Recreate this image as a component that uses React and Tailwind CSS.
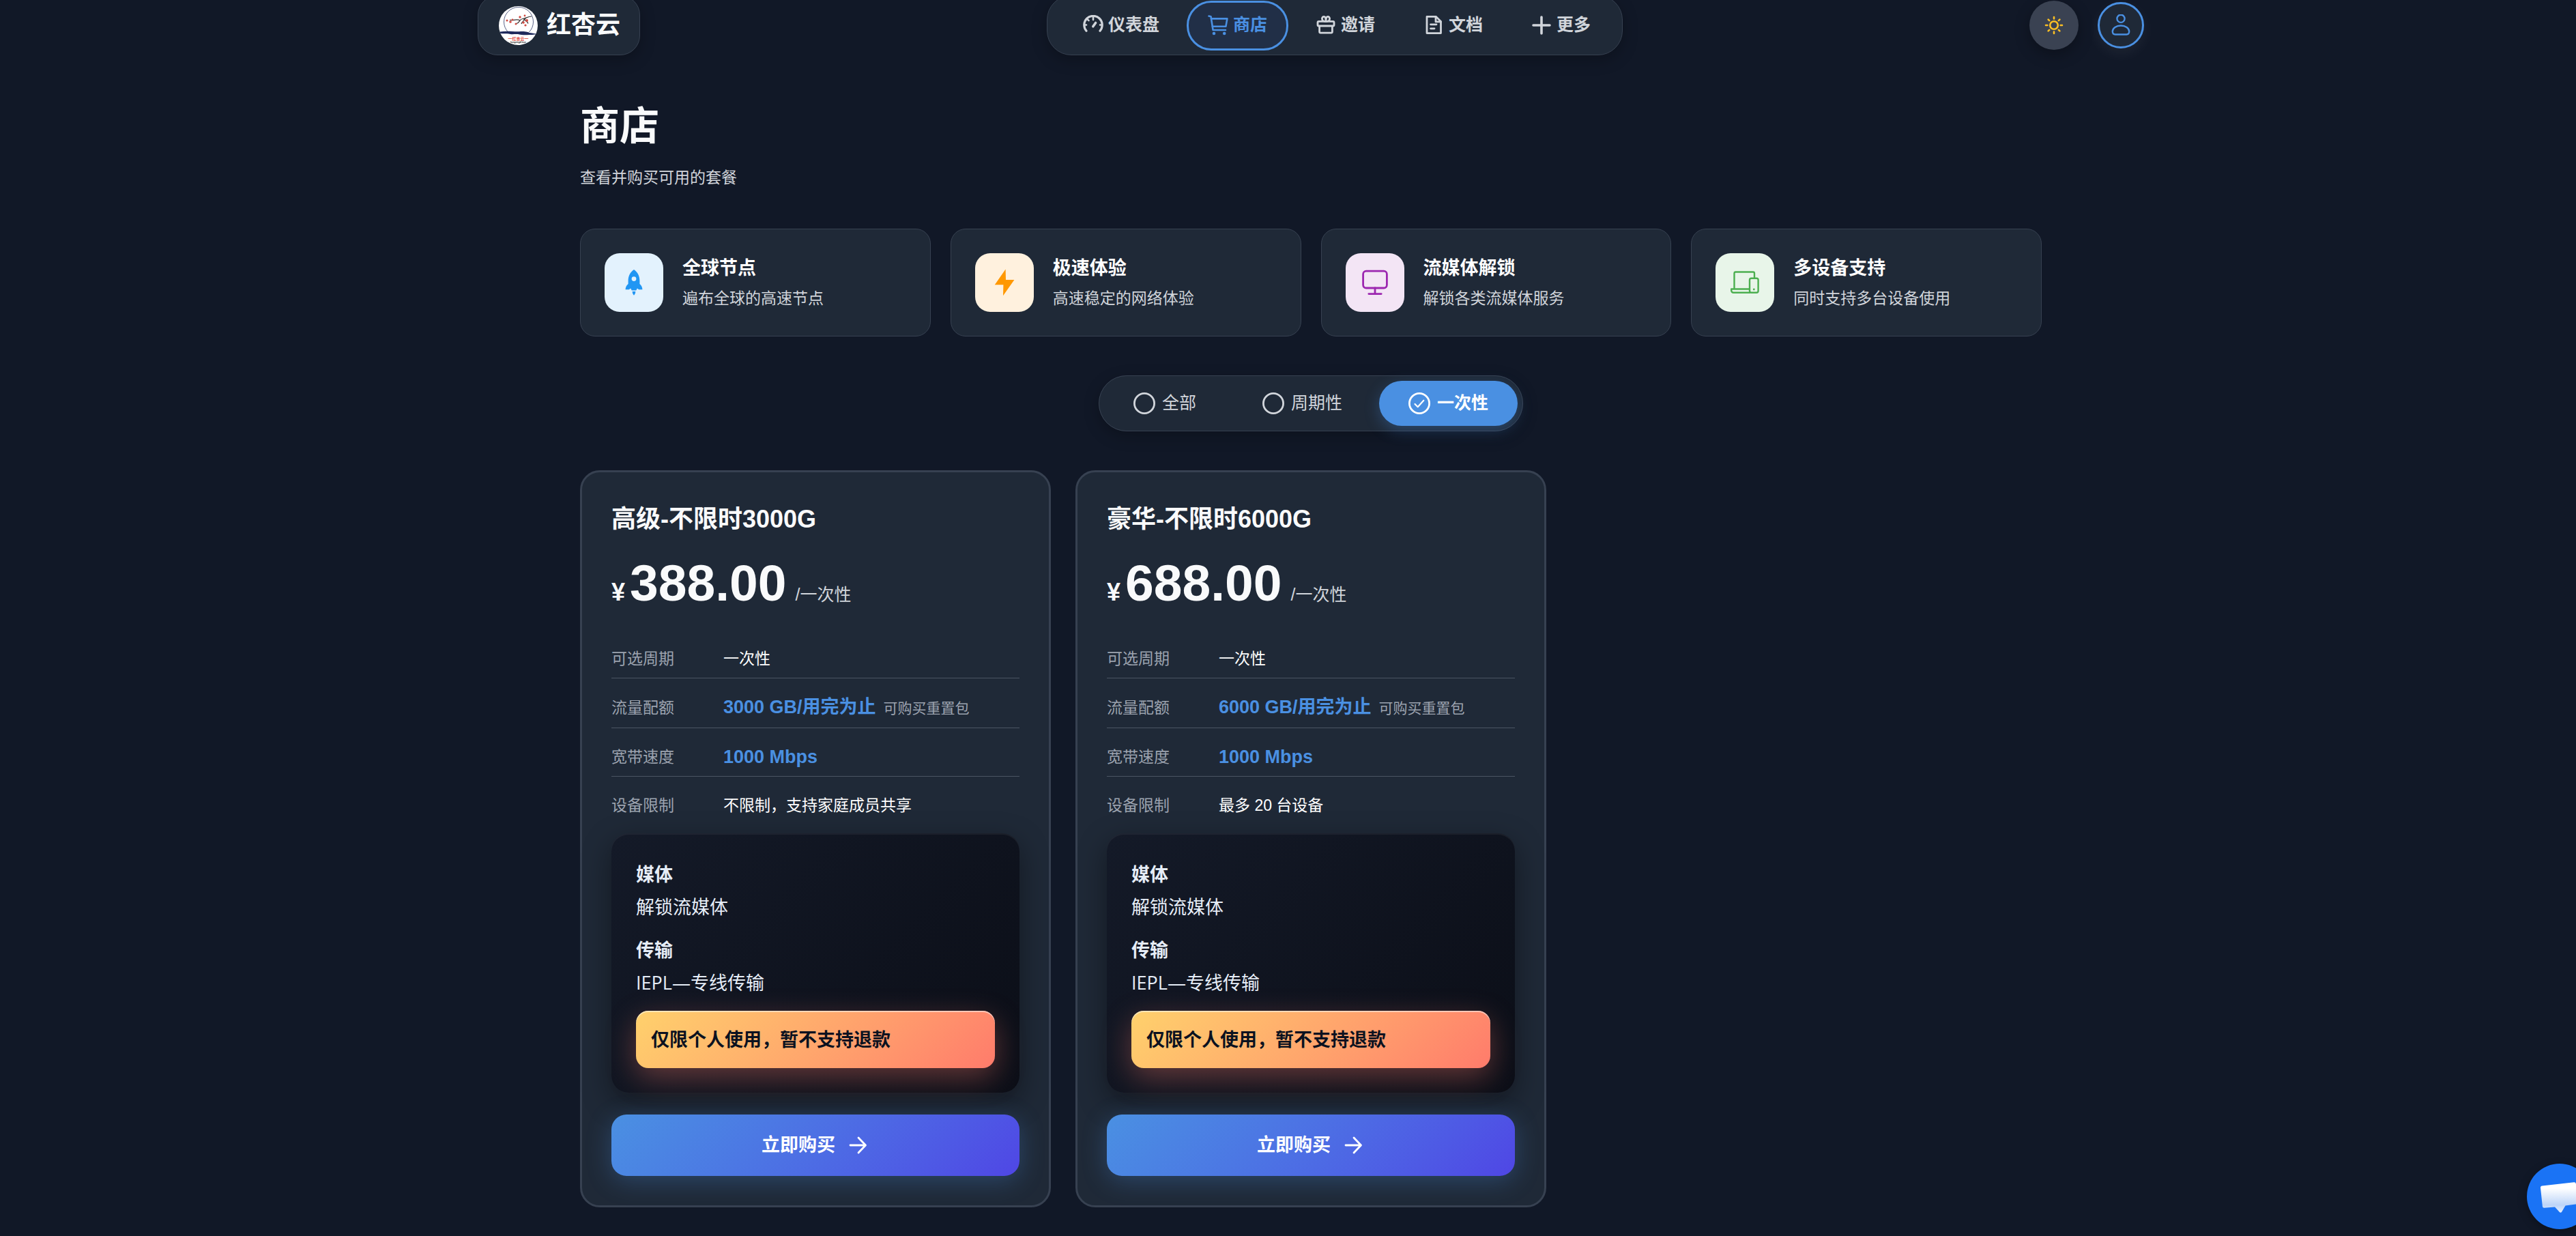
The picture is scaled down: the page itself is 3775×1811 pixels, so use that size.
import { useState } from 'react';

const navItems = [
  { label: '仪表盘', icon: GaugeIcon },
  { label: '商店', icon: CartIcon, active: true },
  { label: '邀请', icon: GiftIcon },
  { label: '文档', icon: DocIcon },
];

const features = [
  { title: '全球节点', desc: '遍布全球的高速节点', icon: RocketIcon, box: 'bg-[#e3f2fd] text-[#2196f3]' },
  { title: '极速体验', desc: '高速稳定的网络体验', icon: BoltIcon, box: 'bg-[#fff1de] text-[#ff9800]' },
  { title: '流媒体解锁', desc: '解锁各类流媒体服务', icon: MonitorIcon, box: 'bg-[#f3e5f5] text-[#9c27b0]' },
  { title: '多设备支持', desc: '同时支持多台设备使用', icon: DevicesIcon, box: 'bg-[#e8f5e9] text-[#4caf50]' },
];

const filters = ['全部', '周期性', '一次性'];

const plans = [
  { name: '高级-不限时3000G', price: '388.00', traffic: '3000 GB/用完为止', devices: '不限制，支持家庭成员共享' },
  { name: '豪华-不限时6000G', price: '688.00', traffic: '6000 GB/用完为止', devices: '最多 20 台设备' },
];

/* Nav icons */
function GaugeIcon() {
  return (
    <svg className="size-[30px]" viewBox="0 0 30 30" fill="none" stroke="currentColor" strokeWidth="3.2" strokeLinecap="round" aria-hidden="true">
      <path d="M5 23.2A13.2 13.2 0 1 1 25 23.2" />
      <path d="M15 3.5v3.5M3.5 14.5h1.5M25 14.5h1.5M7.2 6.8l1.3 1.3" strokeWidth="2.6" />
      <path d="M14.8 16.8l3.8-5.3" strokeWidth="3.6" />
    </svg>
  );
}

function CartIcon() {
  return (
    <svg className="size-[30px]" viewBox="0 0 30 30" fill="none" stroke="currentColor" strokeWidth="2.6" strokeLinecap="round" strokeLinejoin="round" aria-hidden="true">
      <path d="M1.5 1.5l3 .8L7.6 22H26" />
      <path d="M5 5.4h23.4l-2 11.4H6.8" />
      <circle cx="9" cy="27" r="2.3" fill="currentColor" stroke="none" />
      <circle cx="24.2" cy="27" r="2.3" fill="currentColor" stroke="none" />
    </svg>
  );
}

function GiftIcon() {
  return (
    <svg className="size-[30px]" viewBox="0 0 30 30" fill="none" stroke="currentColor" strokeWidth="2.8" strokeLinejoin="round" aria-hidden="true">
      <rect x="3" y="9.4" width="24" height="6.6" rx="1.5" />
      <path d="M5.6 16v8.5c0 1 .6 1.6 1.6 1.6h15.6c1 0 1.6-.6 1.6-1.6V16" />
      <path d="M15 9.4c-3 0-5.6-1.4-5.6-4 0-1.9 1.2-3 2.7-3 1.9 0 2.9 2.6 2.9 7zM15 9.4c3 0 5.6-1.4 5.6-4 0-1.9-1.2-3-2.7-3-1.9 0-2.900 2.6-2.9 7z" />
    </svg>
  );
}

function DocIcon() {
  return (
    <svg className="size-[30px]" viewBox="0 0 30 30" fill="none" stroke="currentColor" strokeWidth="2.8" strokeLinecap="round" strokeLinejoin="round" aria-hidden="true">
      <path d="M5 2.4h13.5l7 7v17.2H5z" />
      <path d="M18 2.4v7.5h7.5M10.5 13.8H19M10.5 19.8H16" />
    </svg>
  );
}

function PlusIcon() {
  return (
    <svg className="size-[30px]" viewBox="0 0 30 30" fill="none" stroke="currentColor" strokeWidth="3.6" strokeLinecap="round" aria-hidden="true">
      <path d="M15 3v24M3 15h24" />
    </svg>
  );
}

/* Feature icons */
function RocketIcon() {
  return (
    <svg className="size-[42px]" viewBox="0 0 42 42" fill="currentColor" aria-hidden="true">
      <path
        fillRule="evenodd"
        d="M21 2c5.500 3.6 8.4 9.6 8.4 16.5V23c2.6 2.3 4 5 4 8.2h-5.2l-2.3-1.7-1.7 3h-6.4l-1.7-3-2.3 1.7H8.6c0-3.2 1.4-5.9 4-8.2v-4.5C12.6 11.6 15.5 5.600 21 2zm0 10.2a3.4 3.4 0 1 0 0 6.8 3.4 3.4 0 0 0 0-6.8z"
      />
      <path d="M18.7 34h4.6c0 2.4-.8 4.3-2.3 5.8-1.5-1.5-2.3-3.4-2.3-5.8z" />
    </svg>
  );
}

function BoltIcon() {
  return (
    <svg className="size-[42px]" viewBox="0 0 42 42" fill="currentColor" aria-hidden="true">
      <path d="M22.6 1.500L6.800 24.2h12.6L19 40.2 35.4 17H23z" />
    </svg>
  );
}

function MonitorIcon() {
  return (
    <svg className="size-[42px]" viewBox="0 0 42 42" fill="none" stroke="currentColor" strokeWidth="2.8" strokeLinecap="round" aria-hidden="true">
      <rect x="3.6" y="4.2" width="34.8" height="24.8" rx="4.5" />
      <path d="M21 29v8.6M11.8 37.6h18.4" />
    </svg>
  );
}

function DevicesIcon() {
  return (
    <svg className="size-[42px]" viewBox="0 0 42 42" fill="none" stroke="currentColor" strokeWidth="2.4" strokeLinejoin="round" aria-hidden="true">
      <path d="M5.5 30.5v-23a2 2 0 0 1 2-2H33a2 2 0 0 1 2 2V14" />
      <path d="M28 30.5H1.2v2.2a3 3 0 0 0 3 3H29" />
      <rect x="28" y="14.8" width="12.6" height="20.9" rx="2.5" />
      <circle cx="34.3" cy="31" r="1.4" fill="currentColor" stroke="none" />
    </svg>
  );
}

function SunIcon() {
  return (
    <svg className="size-8" viewBox="0 0 32 32" fill="none" stroke="currentColor" strokeWidth="2.6" strokeLinecap="round" aria-hidden="true">
      <circle cx="16" cy="16" r="5.8" />
      <path d="M16 4v2.400M16 25.6V28M4 16h2.4M25.6 16H28M7.600 7.6l1.6 1.6M22.8 22.8l1.6 1.6M7.6 24.4l1.6-1.6M22.8 9.2l1.6-1.6" />
    </svg>
  );
}

function UserIcon() {
  return (
    <svg className="size-8" viewBox="0 0 32 32" fill="none" stroke="currentColor" strokeWidth="2.4" aria-hidden="true">
      <circle cx="16" cy="6.300" r="5.6" />
      <path d="M16 16.5c6.8 0 12.2 3.7 12.2 8.6 0 3-1.3 4.4-4 4.4H7.8c-2.7 0-4-1.4-4-4.4 0-4.900 5.4-8.6 12.2-8.6z" />
    </svg>
  );
}

function RadioIcon({ checked }) {
  return (
    <svg className="size-8" viewBox="0 0 32 32" fill="none" stroke="currentColor" strokeWidth="2.8" strokeLinecap="round" strokeLinejoin="round" aria-hidden="true">
      <circle cx="16" cy="16" r="14.6" />
      {checked && <path d="M9.5 17l4.2 4.2 8.6-9.5" strokeWidth="2.2" />}
    </svg>
  );
}

function LogoIcon() {
  return (
    <svg className="size-[57px]" viewBox="0 0 57 57" aria-hidden="true">
      <circle cx="28.5" cy="28.5" r="28.5" fill="#fff" />
      <circle cx="29" cy="23" r="21.5" fill="none" stroke="#5b6488" strokeWidth="1" />
      <path d="M8 40h42v6H8z" fill="#fff" />
      <path d="M48 15c-6 0-8 3-13 3.5S31 24 26 25.5M40 16.5c-2 4-6 6-7 9.5M36 18.5c2 3 6 3 7 7M31 21c-5-3-8 1-15-1" fill="none" stroke="#3a3636" strokeWidth="1.2" />
      <g fill="#cf4a42">
        <circle cx="12" cy="21" r="1.5" />
        <circle cx="17" cy="23" r="1.8" />
        <circle cx="20" cy="20" r="1.4" />
        <circle cx="25" cy="26" r="1.5" />
        <circle cx="31" cy="16" r="1.7" />
        <circle cx="36" cy="24" r="1.8" />
        <circle cx="41" cy="21" r="2" />
        <circle cx="39" cy="28" r="1.6" />
        <circle cx="38" cy="14" r="1.4" />
      </g>
      <path d="M2 37.5c10-2 22 .5 30-.5 6 0 11 .5 12 2 4 .5 8 .5 12 2-8 1.5-19 1.5-26 .5-4-1.2-9 .3-13-.5-7-1.500-12 0-15.5-1.500z" fill="#1f2a5c" />
      <text x="28.5" y="50" textAnchor="middle" fontSize="6" fontWeight="700" fill="#e0483c">一红杏云一</text>
      <text x="28.5" y="54" textAnchor="middle" fontSize="3" fontWeight="700" fill="#222">hongxingdl.love</text>
    </svg>
  );
}

function NavItem({ label, icon: Icon, active }) {
  return (
    <a
      href="#"
      className={
        active
          ? 'flex h-[73px] items-center gap-[7px] rounded-[36px] border-[3px] border-[#4a90e2] bg-[#212f47] px-7 text-[#4a90e2]'
          : 'flex h-[73px] items-center gap-[7px] rounded-[36px] px-[31px] text-[#d1d5db]'
      }
    >
      <Icon />
      {label}
    </a>
  );
}

function Header() {
  return (
    <header className="mx-auto -mt-[7px] flex max-w-[2442px] items-center justify-between">
      <a href="#" className="flex h-[88px] items-center gap-[13px] rounded-[29px] border border-[#374151] bg-[#1f2937] pr-7 pl-[30px] text-[36px] font-bold text-[#f9fafb] shadow-[0_7px_22px_rgba(0,0,0,0.25)]">
        <LogoIcon />
        红杏云
      </a>
      <nav className="flex h-[88px] items-center gap-[9px] rounded-[36px] border border-[#374151] bg-[#1f2937] pr-[15px] pl-[21px] text-[25px] font-bold shadow-[0_7px_22px_rgba(0,0,0,0.25)]">
        {navItems.map((item) => (
          <NavItem key={item.label} {...item} />
        ))}
        <button type="button" className="flex h-[73px] items-center gap-[7px] px-[31px] text-[#d1d5db]">
          <PlusIcon />
          更多
        </button>
      </nav>
      <div className="flex items-center gap-7">
        <button type="button" aria-label="切换主题" className="flex size-[72px] items-center justify-center rounded-full bg-[#3a4252] text-[#fbbf24] shadow-[0_7px_22px_rgba(0,0,0,0.3)]">
          <SunIcon />
        </button>
        <button type="button" aria-label="用户" className="flex size-[68px] items-center justify-center rounded-full border-[3px] border-[#4a90e2] bg-[#1f2937] text-[#4a90e2] shadow-[0_7px_22px_rgba(255,255,255,0.06)]">
          <UserIcon />
        </button>
      </div>
    </header>
  );
}

function FeatureCard({ title, desc, icon: Icon, box }) {
  return (
    <div className="flex items-center gap-7 rounded-[22px] border border-[#374151] bg-[#1f2937] p-[35px]">
      <div className={`flex size-[86px] shrink-0 items-center justify-center rounded-[22px] ${box}`}>
        <Icon />
      </div>
      <div>
        <h2 className="text-[27px] leading-10 font-bold text-white">{title}</h2>
        <p className="mt-1.5 text-[23px] leading-9 text-[#d1d5db]">{desc}</p>
      </div>
    </div>
  );
}

function SpecRow({ label, last, children }) {
  return (
    <div className={last ? 'flex items-center pt-[27px] pb-[13px]' : 'flex items-center border-b border-[#4b5563] pt-[27px] pb-[13px]'}>
      <dt className="w-[164px] shrink-0 text-[23px] leading-[30px] text-[#9ca3af]">{label}</dt>
      <dd className="flex items-baseline gap-[11px] text-[23px] leading-[30px] text-white">{children}</dd>
    </div>
  );
}

function PlanCard({ name, price, traffic, devices }) {
  return (
    <article className="rounded-[29px] border-[3px] border-[#374151] bg-[#1f2937] px-[43px] pt-[45px] pb-[43px]">
      <h3 className="text-[36px] leading-[48px] font-bold text-[#f9fafb]">{name}</h3>
      <div className="mt-[31px] flex items-baseline text-[#f9fafb]">
        <span className="text-[36px] leading-none font-bold">¥</span>
        <span className="ml-[7px] text-[75px] leading-[76px] font-bold">{price}</span>
        <span className="ml-[13px] text-[25px] leading-none text-[#d1d5db]">/一次性</span>
      </div>

      <dl className="mt-[31px]">
        <SpecRow label="可选周期">一次性</SpecRow>
        <SpecRow label="流量配额">
          <span className="text-[27px] font-bold text-[#4a90e2]">{traffic}</span>
          <span className="text-[21px] text-[#9ca3af]">可购买重置包</span>
        </SpecRow>
        <SpecRow label="宽带速度">
          <span className="text-[27px] font-bold text-[#4a90e2]">1000 Mbps</span>
        </SpecRow>
        <SpecRow label="设备限制" last>{devices}</SpecRow>
      </dl>

      <div className="mt-[13px] rounded-[25px] bg-linear-135 from-[#141a28] to-[#0b0e17] p-9 font-['Open_Sans','Noto_Sans_CJK_SC',sans-serif] text-[27px] leading-[48px] text-[#e6edf7] shadow-[0_14px_43px_rgba(0,0,0,0.4),inset_0_2px_0_rgba(255,255,255,0.05)]">
        <p className="font-bold">媒体</p>
        <p>解锁流媒体</p>
        <p className="mt-[15px] font-bold">传输</p>
        <p>IEPL—专线传输</p>
        <p className="mt-[17px] rounded-[18px] bg-linear-135 from-[#ffd16c] to-[#ff7b6b] px-[22px] py-[18px] font-bold text-[#0b1220] shadow-[0_14px_43px_rgba(255,123,107,0.35),inset_0_2px_0_rgba(255,255,255,0.5)]">
          仅限个人使用，暂不支持退款
        </p>
      </div>

      <button
        type="button"
        className="mt-8 flex h-[90px] w-full items-center justify-center gap-[18px] rounded-[22px] bg-linear-135 from-[#4a90e2] to-[#4f46e5] text-[27px] font-bold text-white shadow-[0_7px_36px_rgba(74,144,226,0.3)]"
      >
        立即购买
        <svg className="size-8" viewBox="0 0 32 32" fill="none" stroke="currentColor" strokeWidth="2.8" strokeLinecap="round" strokeLinejoin="round" aria-hidden="true">
          <path d="M4 16h22M16 5l10.500 11L16 27" />
        </svg>
      </button>
    </article>
  );
}

function ChatButton() {
  return (
    <button type="button" aria-label="在线客服" className="fixed -right-6 bottom-[10px] size-24 rounded-full bg-[#1a73f5] shadow-[0_4px_14px_rgba(0,0,0,0.3)]">
      <svg className="size-24" viewBox="0 0 96 96" aria-hidden="true">
        <defs>
          <linearGradient id="bubble" x1="0" y1="0" x2="0" y2="1">
            <stop offset="0.2" stopColor="#fff" />
            <stop offset="0.75" stopColor="#bcd4f8" />
            <stop offset="1" stopColor="#e6effd" />
          </linearGradient>
        </defs>
        <path
          d="M22.5 32.5L69 27.2q2.6-.2 2.9 2.4l3.5 27q.2 2.4-2.2 2.7l-16.7 2.2-5.6 9.6q-1.5 1.5-3 0L41 63.5l-15.5 1.3q-2.3.2-2.6-2.1L20 35.5q-.3-2.7 2.5-3z"
          fill="url(#bubble)"
        />
      </svg>
    </button>
  );
}

export default function App() {
  const [filter, setFilter] = useState('一次性');

  return (
    <div className="flow-root min-h-screen overflow-hidden bg-[#111827] pb-9 pl-[67px] font-['Liberation_Sans','Noto_Sans_CJK_SC',sans-serif]">
      <Header />

      <main className="mx-auto max-w-[2142px] pt-16">
        <h1 className="text-[58px] leading-[80px] font-bold text-[#f9fafb]">商店</h1>
        <p className="mt-[17px] text-[23px] leading-9 text-[#d1d5db]">查看并购买可用的套餐</p>

        <section className="mt-[57px] grid grid-cols-4 gap-[29px]">
          {features.map((feature) => (
            <FeatureCard key={feature.title} {...feature} />
          ))}
        </section>

        {/* Plan type filter */}
        <fieldset className="mx-auto mt-[57px] flex w-fit gap-[11px] rounded-full border border-[#374151] bg-[#1f2937] p-[7px] text-[25px] shadow-[0_7px_22px_rgba(0,0,0,0.25)]">
          {filters.map((name) => (
            <label
              key={name}
              className={
                name === filter
                  ? 'relative flex h-[66px] cursor-pointer items-center gap-2.5 rounded-full bg-[#4a90e2] px-[43px] font-bold text-white shadow-[0_7px_22px_rgba(74,144,226,0.3)]'
                  : 'relative flex h-[66px] cursor-pointer items-center gap-2.5 rounded-full px-[43px] text-[#d1d5db]'
              }
            >
              <input type="radio" name="plan-type" className="sr-only" checked={name === filter} onChange={() => setFilter(name)} />
              <RadioIcon checked={name === filter} />
              {name}
            </label>
          ))}
        </fieldset>

        <section className="mt-[57px] grid grid-cols-3 gap-9">
          {plans.map((plan) => (
            <PlanCard key={plan.name} {...plan} />
          ))}
        </section>
      </main>

      <ChatButton />
    </div>
  );
}
